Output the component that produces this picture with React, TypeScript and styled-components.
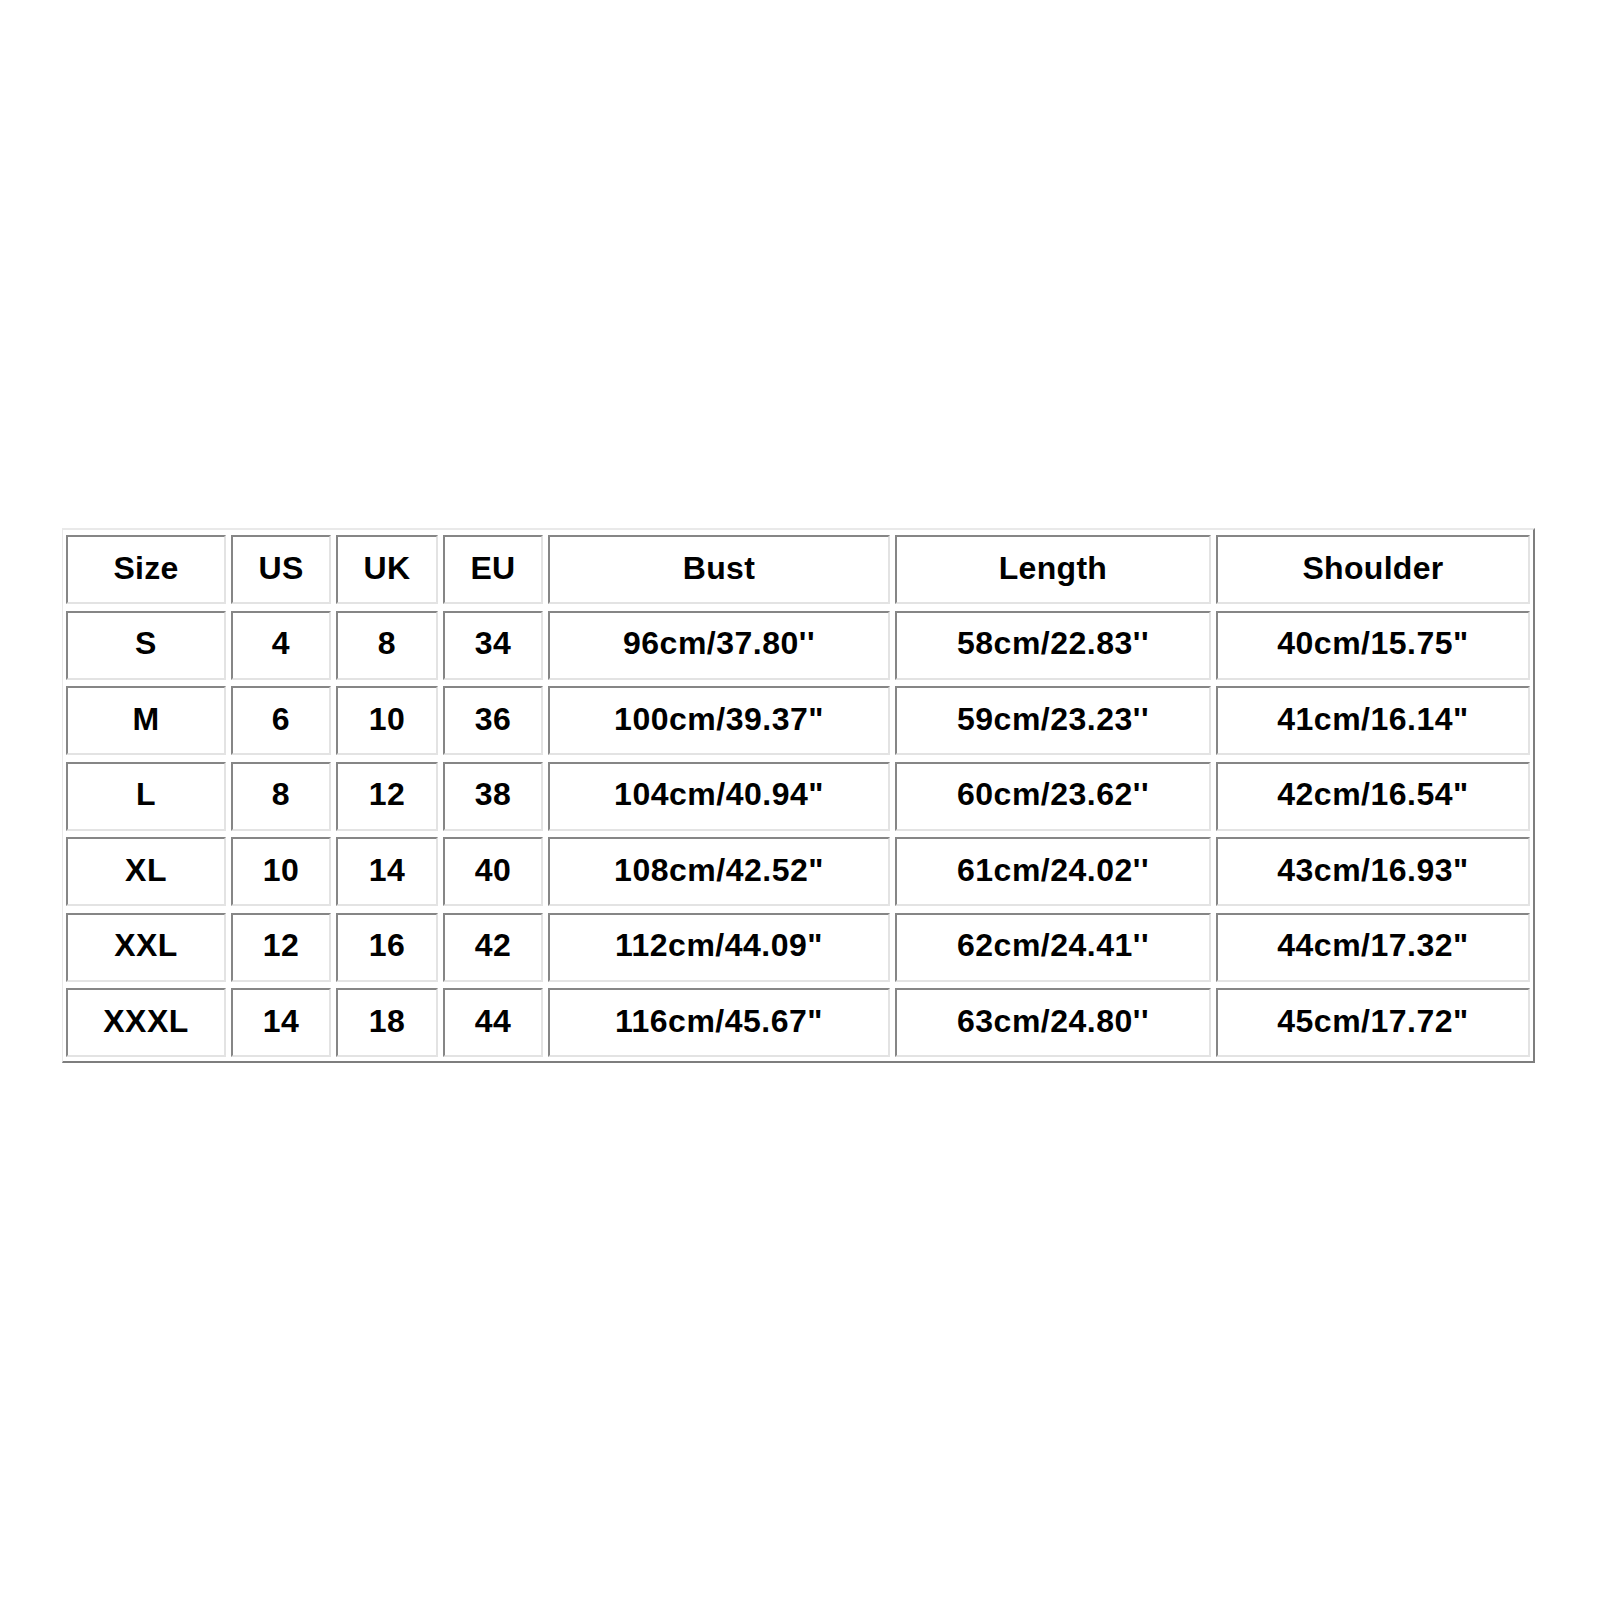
import React from "react";
import styled, { createGlobalStyle } from "styled-components";

const GlobalStyle = createGlobalStyle`
  html, body {
    margin: 0;
    padding: 0;
    background: #ffffff;
  }
  body {
    font-family: "Liberation Sans", Arial, sans-serif;
  }
`;

const Page = styled.div`
  width: 1600px;
  height: 1600px;
  box-sizing: border-box;
  padding: 528px 0 0 62px;
  background: #ffffff;
  display: flex;
  align-items: flex-start;
`;

const SizeTable = styled.div`
  display: grid;
  grid-template-columns: 160px 100px 102px 100px 342px 316px 314px;
  grid-auto-rows: 69px;
  column-gap: 5px;
  row-gap: 6.5px;
  padding: 5px 3px 4px 3px;
  border-style: solid;
  border-width: 2px 2px 2px 1px;
  border-color: #e9e9e9 #7e7e7e #7e7e7e #e9e9e9;
  background: #ffffff;
`;

const Cell = styled.div<{ $head?: boolean }>`
  box-sizing: border-box;
  display: flex;
  align-items: center;
  justify-content: center;
  border-style: solid;
  border-width: 2px;
  border-color: #868686 #e3e3e3 #e3e3e3 #868686;
  font-family: "Liberation Sans", Arial, sans-serif;
  font-weight: 700;
  font-size: 32px;
  letter-spacing: ${(p) => (p.$head ? "0.3px" : "0.5px")};
  color: #000000;
  white-space: nowrap;
  padding-bottom: 3px;
`;

const headers = ["Size", "US", "UK", "EU", "Bust", "Length", "Shoulder"];

const rows: string[][] = [
  ["S", "4", "8", "34", "96cm/37.80''", "58cm/22.83''", "40cm/15.75\""],
  ["M", "6", "10", "36", "100cm/39.37\"", "59cm/23.23''", "41cm/16.14\""],
  ["L", "8", "12", "38", "104cm/40.94\"", "60cm/23.62''", "42cm/16.54\""],
  ["XL", "10", "14", "40", "108cm/42.52\"", "61cm/24.02''", "43cm/16.93\""],
  ["XXL", "12", "16", "42", "112cm/44.09\"", "62cm/24.41''", "44cm/17.32\""],
  ["XXXL", "14", "18", "44", "116cm/45.67\"", "63cm/24.80''", "45cm/17.72\""],
];

export default function App() {
  return (
    <>
      <GlobalStyle />
      <Page>
        <SizeTable>
          {headers.map((h) => (
            <Cell key={h} $head>
              {h}
            </Cell>
          ))}
          {rows.map((r, i) =>
            r.map((v, j) => <Cell key={`${i}-${j}`}>{v}</Cell>)
          )}
        </SizeTable>
      </Page>
    </>
  );
}
